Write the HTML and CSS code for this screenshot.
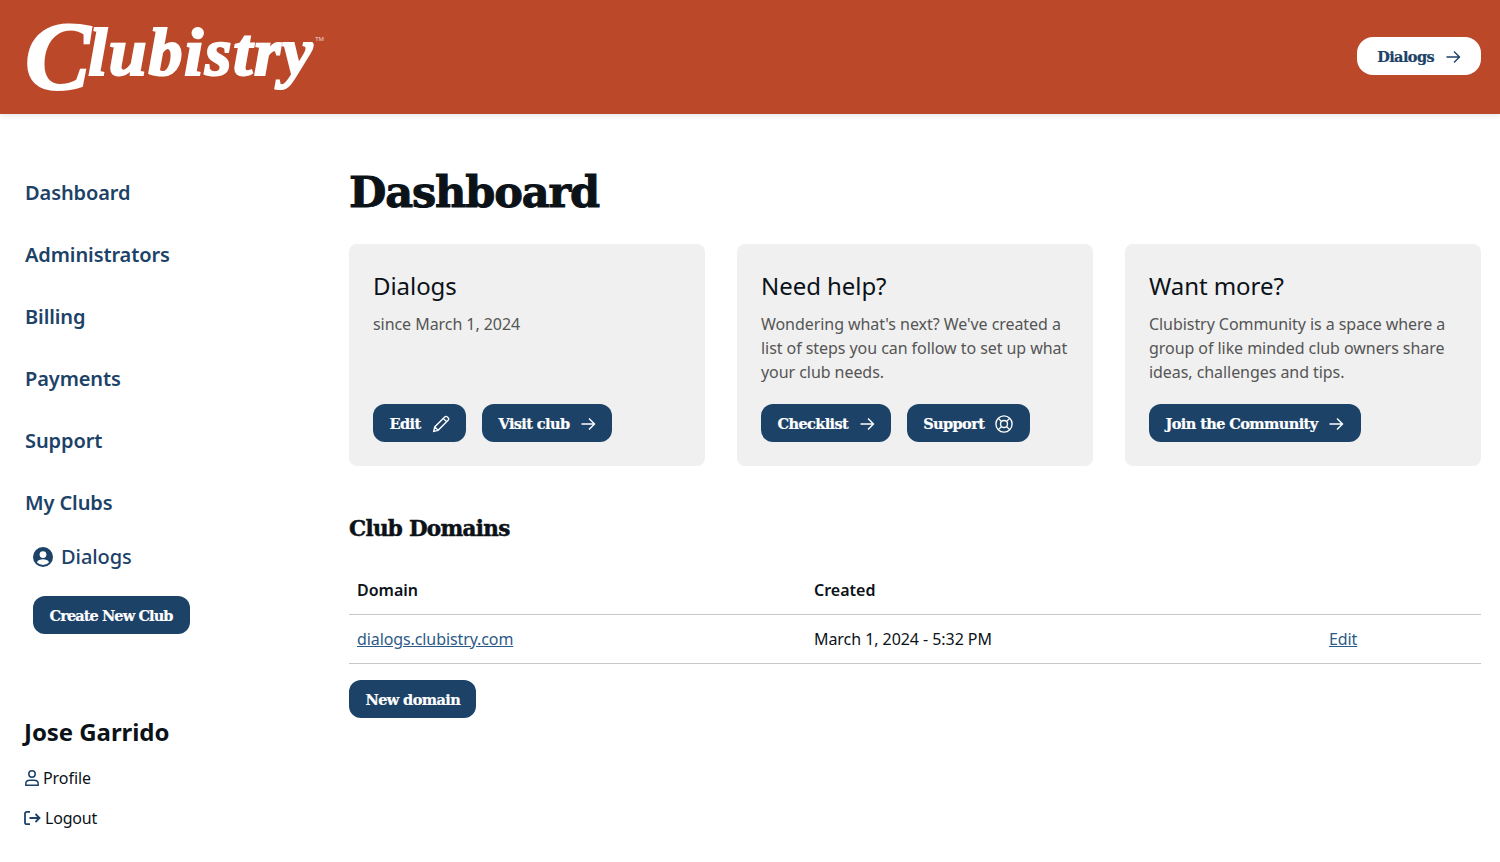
FILE: index.html
```html
<!DOCTYPE html>
<html lang="en">

<head>
    <meta charset="UTF-8">
    <meta name="viewport" content="width=device-width, initial-scale=1.0">
    <title>Dashboard</title>
    <link rel="stylesheet" href="styles.css">
</head>

<body>
    <!-- Header -->
    <header class="site-header">
        <a class="logo" href="#"><span class="logo-c">C</span>lubistry<span class="logo-tm">TM</span></a>
        <a class="btn btn-light" href="#">Dialogs
            <svg class="icon" viewBox="0 0 16 16"><path d="M1.500 8h13M9 2.500 14.500 8 9 13.500"/></svg>
        </a>
    </header>

    <div class="page">
        <!-- Sidebar -->
        <aside class="sidebar">
            <nav class="side-nav">
                <a href="#">Dashboard</a>
                <a href="#">Administrators</a>
                <a href="#">Billing</a>
                <a href="#">Payments</a>
                <a href="#">Support</a>
                <a href="#">My Clubs</a>
            </nav>
            <a class="club-link" href="#">
                <svg class="club-icon" viewBox="0 0 20 20">
                    <circle cx="10" cy="10" r="10" fill="#1c4268"/>
                    <circle cx="10" cy="7.600" r="3.400" fill="#fff"/>
                    <path d="M3.900 15.200C5 12.900 7.200 12.200 10 12.200s5 .7 6.100 3A8 8 0 0 1 10 18a8 8 0 0 1-6.100-2.800z" fill="#fff"/>
                </svg>
                Dialogs
            </a>
            <a class="btn create-club" href="#">Create New Club</a>

            <div class="user-box">
                <h4>Jose Garrido</h4>
                <a class="user-link" href="#">
                    <svg class="user-icon" viewBox="0 0 14 16"><circle cx="7" cy="4" r="3.200"/><path d="M.8 15.200h12.400v-1.400c0-2.300-2-3.600-4.200-3.600H5c-2.200 0-4.200 1.300-4.200 3.600z"/></svg>
                    Profile
                </a>
                <a class="user-link logout-link" href="#">
                    <svg class="logout-icon" viewBox="0 0 17 16"><path d="M6 1.800H3C1.700 1.800 1 2.500 1 3.600v8.800c0 1.100.7 1.800 2 1.800h3M5.500 8h10M11.500 4l4 4-4 4"/></svg>
                    Logout
                </a>
            </div>
        </aside>

        <!-- Main content -->
        <main class="content">
            <h1>Dashboard</h1>

            <div class="cards">
                <div class="card">
                    <h3>Dialogs</h3>
                    <p>since March 1, 2024</p>
                    <div class="card-actions">
                        <a class="btn" href="#">Edit
                            <svg class="icon icon-wide" viewBox="0 0 16 16"><path d="M1.500 14.500l.9-3.900L11.300 1.700c.7-.7 1.700-.7 2.300 0l.7.7c.6.600.6 1.600 0 2.300L5.400 13.600zM2.400 10.600l3 3M10 3l3 3"/></svg>
                        </a>
                        <a class="btn" href="#">Visit club
                            <svg class="icon" viewBox="0 0 16 16"><path d="M1.500 8h13M9 2.500 14.500 8 9 13.500"/></svg>
                        </a>
                    </div>
                </div>
                <div class="card">
                    <h3>Need help?</h3>
                    <p>Wondering what's next? We've created a list of steps you can follow to set up what your club needs.</p>
                    <div class="card-actions">
                        <a class="btn" href="#">Checklist
                            <svg class="icon" viewBox="0 0 16 16"><path d="M1.500 8h13M9 2.500 14.500 8 9 13.500"/></svg>
                        </a>
                        <a class="btn" href="#">Support
                            <svg class="icon icon-wide" viewBox="0 0 16 16"><circle cx="8" cy="8" r="7.200"/><circle cx="8" cy="8" r="3.100"/><path d="M3 3l2.800 2.800M13 3l-2.800 2.800M3 13l2.800-2.800M13 13l-2.800-2.800"/></svg>
                        </a>
                    </div>
                </div>
                <div class="card">
                    <h3>Want more?</h3>
                    <p>Clubistry Community is a space where a group of like minded club owners share ideas, challenges and tips.</p>
                    <div class="card-actions">
                        <a class="btn btn-join" href="#">Join the Community
                            <svg class="icon" viewBox="0 0 16 16"><path d="M1.500 8h13M9 2.500 14.500 8 9 13.500"/></svg>
                        </a>
                    </div>
                </div>
            </div>

            <h2>Club Domains</h2>

            <table class="domains">
                <thead>
                    <tr>
                        <th class="col-domain">Domain</th>
                        <th class="col-created">Created</th>
                        <th></th>
                    </tr>
                </thead>
                <tbody>
                    <tr>
                        <td><a href="#">dialogs.clubistry.com</a></td>
                        <td>March 1, 2024 - 5:32 PM</td>
                        <td><a href="#">Edit</a></td>
                    </tr>
                </tbody>
            </table>

            <a class="btn" href="#">New domain</a>
        </main>
    </div>
</body>
</html>
```

FILE: styles.css
```css
/* General Styling */
body {
    font-family: "Noto Sans", sans-serif;
    font-size: 16px;
    line-height: 24px;
    letter-spacing: -0.06px;
    color: #0b1218;
    background-color: #fff;
    margin: 0;
    padding: 0;
}

a {
    color: inherit;
    text-decoration: none;
}

/* Header */
.site-header {
    height: 114px;
    padding: 0 19px 0 25px;
    background-color: #bc482a;
    display: flex;
    align-items: center;
    justify-content: space-between;
    box-shadow: 0 1px 6px rgba(0, 0, 0, 0.12);
}

.logo {
    display: block;
    height: 78px;
    margin-bottom: 10px;
    font-family: "Liberation Serif", serif;
    font-size: 68px;
    line-height: 78px;
    font-weight: bold;
    font-style: italic;
    letter-spacing: 1.800px;
    color: #fff;
    -webkit-text-stroke: 2.200px #fff;
    white-space: nowrap;
}

.logo-c {
    font-size: 98px;
    vertical-align: -14px;
    margin-right: -4px;
}

.logo-tm {
    font-family: "Noto Sans", sans-serif;
    font-size: 6px;
    line-height: 8px;
    font-style: normal;
    font-weight: normal;
    letter-spacing: 0;
    margin-left: 1px;
    vertical-align: 34px;
    -webkit-text-stroke: 0;
    color: #f1d9d2;
}

/* Buttons */
.btn {
    display: inline-flex;
    align-items: center;
    gap: 11px;
    height: 38px;
    box-sizing: border-box;
    padding: 1px 15.500px 0 16.500px;
    border-radius: 12px;
    background-color: #1c4268;
    color: #fff;
    font-family: "DejaVu Serif", serif;
    font-size: 14.500px;
    font-weight: bold;
    letter-spacing: -0.600px;
    -webkit-text-stroke: 0.200px currentColor;
    white-space: nowrap;
}

.btn-light {
    background-color: #fff;
    color: #1c4268;
    border-radius: 16px;
    padding: 1px 20px 0;
    margin-bottom: 2px;
}

.btn-join {
    padding-right: 16.500px;
}

.icon {
    width: 16px;
    height: 16px;
    fill: none;
    stroke: currentColor;
    stroke-width: 1.400;
    flex-shrink: 0;
}

.icon-wide {
    width: 18px;
    height: 18px;
    margin-right: 1px;
    stroke-width: 1.200;
}

/* Page layout */
.page {
    display: flex;
    padding: 0 19px 0 25px;
}

.sidebar {
    width: 324px;
    flex-shrink: 0;
    padding-top: 48px;
}

.side-nav {
    display: flex;
    flex-direction: column;
}

.side-nav a {
    font-size: 20px;
    line-height: 62px;
    font-weight: 600;
    letter-spacing: -0.100px;
    color: #1c4268;
}

.club-link {
    display: flex;
    align-items: center;
    gap: 8px;
    margin: -4px 0 0 8px;
    font-size: 20px;
    line-height: 54px;
    font-weight: 500;
    color: #1c4268;
}

.club-icon {
    width: 20px;
    height: 20px;
}

.create-club {
    margin: 12px 0 0 8px;
    padding-right: 17px;
    letter-spacing: -0.900px;
}

.user-box {
    margin-top: 80px;
}

.user-box h4 {
    margin: 0 0 16px -1px;
    font-size: 24px;
    line-height: 36px;
    font-weight: 700;
}

.user-link {
    display: flex;
    align-items: center;
    gap: 4px;
    line-height: 24px;
    margin-bottom: 16px;
}

.logout-link {
    letter-spacing: -0.200px;
}

.user-icon,
.logout-icon {
    fill: none;
    stroke: #1c4268;
    stroke-width: 1.500;
    flex-shrink: 0;
}

.user-icon {
    width: 14px;
    height: 16px;
}

.logout-icon {
    width: 17px;
    height: 16px;
    margin-left: -1px;
    stroke-width: 1.800;
}

/* Main content */
.content {
    flex: 1;
    min-width: 0;
}

h1 {
    margin: 48px 0 22px;
    font-family: "DejaVu Serif", serif;
    font-size: 43px;
    line-height: 60px;
    font-weight: bold;
    letter-spacing: -1.100px;
    -webkit-text-stroke: 1px #0b1218;
}

.cards {
    display: grid;
    grid-template-columns: repeat(3, 1fr);
    gap: 32px;
}

.card {
    height: 222px;
    box-sizing: border-box;
    padding: 24px;
    background-color: #f0f0f0;
    border-radius: 8px;
    display: flex;
    flex-direction: column;
}

.card h3 {
    margin: 0 0 8px;
    font-size: 24px;
    line-height: 36px;
    font-weight: 400;
}

.card p {
    margin: 0;
    color: #555;
}

.card-actions {
    margin-top: auto;
    display: flex;
    gap: 16px;
}

h2 {
    margin: 45px 0 19px;
    font-family: "DejaVu Serif", serif;
    font-size: 21.500px;
    line-height: 36px;
    font-weight: bold;
    letter-spacing: -0.700px;
    -webkit-text-stroke: 0.500px #0b1218;
}

/* Domains table */
.domains {
    width: 100%;
    border-collapse: collapse;
    table-layout: fixed;
    margin-bottom: 16px;
}

.domains th,
.domains td {
    padding: 12px 8px;
    text-align: left;
    border-bottom: 1px solid #c8c8c8;
}

.domains th {
    font-weight: 600;
    letter-spacing: 0;
}

.domains a {
    color: #2d5a87;
    text-decoration: underline;
    letter-spacing: -0.100px;
}

.col-domain {
    width: 441px;
}

.col-created {
    width: 499px;
}
```
